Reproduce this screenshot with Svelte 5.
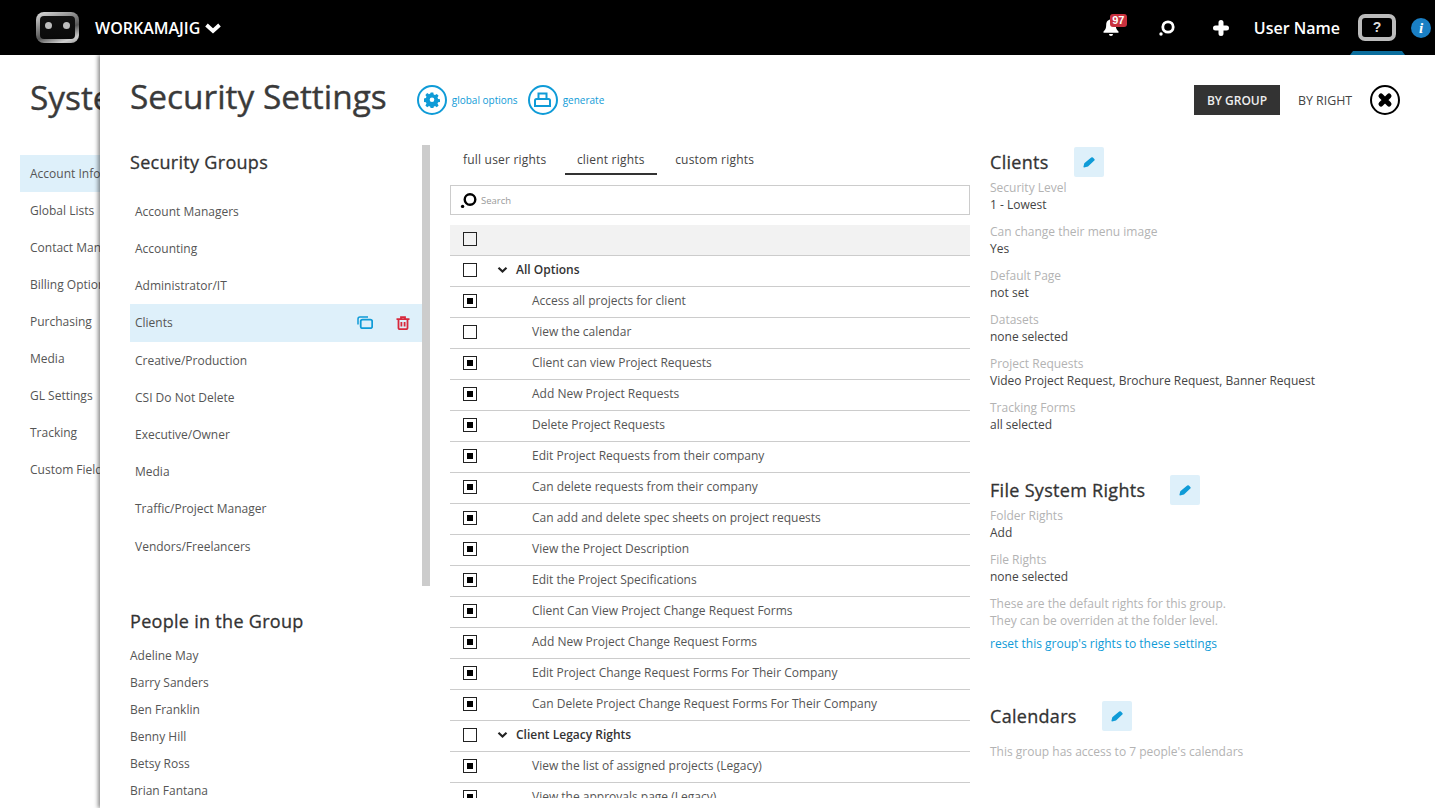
<script>
	const side_items = ['Account Information', 'Global Lists', 'Contact Management', 'Billing Options', 'Purchasing', 'Media', 'GL Settings', 'Tracking', 'Custom Fields'];
	const groups = ['Account Managers', 'Accounting', 'Administrator/IT', 'Clients', 'Creative/Production', 'CSI Do Not Delete', 'Executive/Owner', 'Media', 'Traffic/Project Manager', 'Vendors/Freelancers'];
	const people = ['Adeline May', 'Barry Sanders', 'Ben Franklin', 'Benny Hill', 'Betsy Ross', 'Brian Fantana'];
	const tabs = ['full user rights', 'client rights', 'custom rights'];
	const rows = [
		{ label: 'All Options', head: true, on: false },
		{ label: 'Access all projects for client', on: true },
		{ label: 'View the calendar', on: false },
		{ label: 'Client can view Project Requests', on: true },
		{ label: 'Add New Project Requests', on: true },
		{ label: 'Delete Project Requests', on: true },
		{ label: 'Edit Project Requests from their company', on: true },
		{ label: 'Can delete requests from their company', on: true },
		{ label: 'Can add and delete spec sheets on project requests', on: true },
		{ label: 'View the Project Description', on: true },
		{ label: 'Edit the Project Specifications', on: true },
		{ label: 'Client Can View Project Change Request Forms', on: true },
		{ label: 'Add New Project Change Request Forms', on: true },
		{ label: 'Edit Project Change Request Forms For Their Company', on: true },
		{ label: 'Can Delete Project Change Request Forms For Their Company', on: true },
		{ label: 'Client Legacy Rights', head: true, on: false },
		{ label: 'View the list of assigned projects (Legacy)', on: true },
		{ label: 'View the approvals page (Legacy)', on: true }
	];
	const client_fields = [
		['Security Level', '1 - Lowest'],
		['Can change their menu image', 'Yes'],
		['Default Page', 'not set'],
		['Datasets', 'none selected'],
		['Project Requests', 'Video Project Request, Brochure Request, Banner Request'],
		['Tracking Forms', 'all selected']
	];
	const file_fields = [
		['Folder Rights', 'Add'],
		['File Rights', 'none selected']
	];
</script>

{#snippet pencil()}
	<button class="edit" aria-label="edit">
		<svg width="12" height="11" viewBox="0 0 12 11"><path d="M8.200.6a1.200 1.200 0 0 1 1.700 0l1.400 1.300a1.200 1.200 0 0 1 0 1.700L5 9.500 1 10.600.4 10l.900-3.800z" fill="#0f9bd7" /></svg>
	</button>
{/snippet}

<div class="app">
	<header class="topbar">
		<div class="logo"><i></i><i></i></div>
		<div class="brand">WORKAMAJIG</div>
		<svg class="brand_caret" width="18" height="12" viewBox="0 0 18 12"><path d="M2.500 3l6.500 6 6.500-6" fill="none" stroke="#fff" stroke-width="3.800" /></svg>
		<div class="spacer"></div>
		<div class="bell">
			<svg width="18" height="18" viewBox="0 0 18 18"><path d="M9 1.500c3.200 0 4.800 2.400 4.800 5.400 0 3.200 1 5 2.700 6.600v1.300h-15v-1.300c1.700-1.600 2.700-3.400 2.700-6.600C4.200 3.900 5.800 1.500 9 1.500z" fill="#fff" /><path d="M7 16h4a2 2 0 0 1-4 0z" fill="#fff" /></svg>
			<span class="badge">97</span>
		</div>
		<svg class="top_search" width="18" height="18" viewBox="0 0 18 18"><circle cx="10" cy="8" r="5.200" fill="none" stroke="#fff" stroke-width="2.800" /><circle cx="3" cy="15" r="1.700" fill="#fff" /></svg>
		<svg class="top_plus" width="16" height="16" viewBox="0 0 16 16"><path d="M8 2.500v11M2.500 8h11" stroke="#fff" stroke-width="5" stroke-linecap="round" /></svg>
		<div class="user">User Name</div>
		<div class="help">?</div>
		<div class="info">i</div>
		<span class="help_tab"></span>
	</header>

	<main class="page">
		<h1>System Settings</h1>
		<nav class="side">
			{#each side_items as item, i}
				<div class="side_item" class:active={i === 0}>{item}</div>
			{/each}
		</nav>
	</main>

	<section class="panel">
		<div class="panel_head">
			<h1>Security Settings</h1>
			<button class="round_btn">
				<span class="ring">
					<svg width="16" height="16" viewBox="0 0 16 16"><path d="M6.700.8h2.600l.4 2 1.300.6 1.800-1.100 1.800 1.800-1.100 1.800.6 1.300 2 .4v2.600l-2 .4-.6 1.300 1.100 1.800-1.800 1.800-1.800-1.100-1.300.6-.4 2H6.700l-.4-2-1.300-.6-1.800 1.100-1.800-1.800 1.100-1.800-.6-1.300-2-.4V6.700l2-.4.6-1.300-1.100-1.800 1.800-1.800 1.800 1.100 1.300-.6z" fill="#0f9bd7" transform="translate(0 -.3)" /><circle cx="8" cy="7.800" r="2.300" fill="#fff" /></svg>
				</span>
				global options
			</button>
			<button class="round_btn">
				<span class="ring">
					<svg width="17" height="16" viewBox="0 0 17 16"><path d="M4.500 7V1.500h8V7M2.500 7h12a1.500 1.500 0 0 1 1.500 1.500v5.500H1V8.500A1.500 1.500 0 0 1 2.500 7z" fill="none" stroke="#0f9bd7" stroke-width="2" /></svg>
				</span>
				generate
			</button>
			<div class="spacer"></div>
			<button class="by by_on">BY GROUP</button>
			<button class="by">BY RIGHT</button>
			<button class="close" aria-label="close">
				<svg width="16" height="16" viewBox="0 0 16 16"><path d="M4 4l8 8M12 4l-8 8" stroke="#000" stroke-width="5" stroke-linecap="round" /></svg>
			</button>
		</div>

		<div class="columns">
			<div class="col_groups">
				<div class="groups_box">
					<h2>Security Groups</h2>
					<ul class="groups">
						{#each groups as group}
							<li class:active={group === 'Clients'}>
								<span>{group}</span>
								{#if group === 'Clients'}
									<svg class="copy" width="16" height="13" viewBox="0 0 16 13"><path d="M1 8.500V3a2 2 0 0 1 2-2h8" fill="none" stroke="#0f9bd7" stroke-width="1.500" /><rect x="3.700" y="3.700" width="11.500" height="8.500" rx="1.800" fill="none" stroke="#0f9bd7" stroke-width="1.800" /></svg>
									<svg class="trash" width="14" height="14" viewBox="0 0 14 14"><path d="M.5 3.200h13M5 3V1.200h4V3M2.500 3.500V12a1.200 1.200 0 0 0 1.200 1.200h6.600a1.200 1.200 0 0 0 1.200-1.200V3.500M5.400 6v4.500M8.600 6v4.500" fill="none" stroke="#d8283c" stroke-width="1.800" /></svg>
								{/if}
							</li>
						{/each}
					</ul>
				</div>
				<h2 class="people_title">People in the Group</h2>
				<ul class="people">
					{#each people as person}
						<li>{person}</li>
					{/each}
				</ul>
			</div>

			<div class="col_rights">
				<div class="tabs">
					{#each tabs as tab}
						<div class="tab" class:active={tab === 'client rights'}>{tab}</div>
					{/each}
				</div>
				<div class="search">
					<svg width="17" height="17" viewBox="0 0 17 17"><circle cx="10" cy="7.500" r="5.300" fill="none" stroke="#000" stroke-width="2.400" /><circle cx="2.600" cy="14.400" r="1.700" fill="#000" /></svg>
					<span>Search</span>
				</div>
				<div class="table">
					<div class="row top"><span class="check"></span></div>
					{#each rows as row}
						<div class="row" class:head={row.head}>
							<span class="check" class:on={row.on}></span>
							{#if row.head}
								<svg class="caret" width="11" height="8" viewBox="0 0 11 8"><path d="M1.500 1.800l4 3.700 4-3.700" fill="none" stroke="#222" stroke-width="2.200" /></svg>
							{/if}
							<span class="row_label">{row.label}</span>
						</div>
					{/each}
				</div>
			</div>

			<div class="col_info">
				<div class="info_title"><h2>Clients</h2>{@render pencil()}</div>
				{#each client_fields as [name, value]}
					<div class="field"><div class="muted">{name}</div><div>{value}</div></div>
				{/each}

				<div class="info_title files"><h2>File System Rights</h2>{@render pencil()}</div>
				{#each file_fields as [name, value]}
					<div class="field"><div class="muted">{name}</div><div>{value}</div></div>
				{/each}
				<div class="muted">These are the default rights for this group.</div>
				<div class="muted">They can be overriden at the folder level.</div>
				<div class="reset">reset this group's rights to these settings</div>

				<div class="info_title calendars"><h2>Calendars</h2>{@render pencil()}</div>
				<div class="muted cal_note">This group has access to 7 people's calendars</div>
			</div>
		</div>
	</section>
</div>

<style>
	:global(body) {
		margin: 0;
		background: #fff;
	}

	.app {
		position: relative;
		width: 1435px;
		height: 808px;
		overflow: hidden;
		font-family: 'Open Sans', sans-serif;
		font-size: 12px;
		color: #444;
	}

	button {
		font-family: inherit;
		border: 0;
		background: none;
		padding: 0;
	}

	h1, h2, ul {
		margin: 0;
		padding: 0;
		font-weight: 400;
	}

	li {
		list-style: none;
	}

	.spacer {
		flex: 1;
	}

	/* top bar */
	.topbar {
		position: relative;
		z-index: 3;
		display: flex;
		align-items: center;
		height: 55px;
		background: #000;
		color: #fff;
	}

	.logo {
		display: flex;
		justify-content: center;
		align-items: flex-start;
		gap: 11px;
		box-sizing: border-box;
		width: 43px;
		height: 31px;
		margin-left: 36px;
		padding-top: 6px;
		border: 4px solid transparent;
		border-radius: 8px;
		background:
			linear-gradient(#111, #0a0a0a) padding-box,
			linear-gradient(160deg, #e0e0e0 0%, #8c8c8c 35%, #555 60%, #cfcfcf 85%, #999 100%) border-box;
	}

	.logo i {
		width: 7px;
		height: 7px;
		border-radius: 50%;
		background: #bdbdbd;
	}

	.brand {
		margin-left: 16px;
		font-size: 16px;
		font-weight: 600;
	}

	.brand_caret {
		margin-left: 4px;
	}

	.bell {
		position: relative;
		width: 18px;
		height: 18px;
		margin-top: -2px;
		margin-right: 38px;
	}

	.badge {
		position: absolute;
		top: -4px;
		left: 8px;
		width: 17px;
		height: 13px;
		border-radius: 3px;
		background: #c8313e;
		font-family: 'Liberation Sans', sans-serif;
		font-size: 11px;
		font-weight: 700;
		line-height: 13px;
		text-align: center;
	}

	.top_search {
		margin-right: 37px;
	}

	.top_plus {
		margin-right: 25px;
	}

	.user {
		font-size: 16px;
		font-weight: 600;
		margin-right: 18px;
	}

	.help {
		box-sizing: border-box;
		width: 38px;
		height: 27px;
		margin-right: 15px;
		border: 4px solid #bbb;
		border-radius: 7px;
		font-family: 'Liberation Sans', sans-serif;
		font-size: 14px;
		font-weight: 700;
		line-height: 19px;
		text-align: center;
		color: #ddd;
	}

	.info {
		width: 20px;
		height: 20px;
		margin-right: 4px;
		border-radius: 50%;
		background: #1a7fc4;
		font-family: 'Liberation Serif', serif;
		font-size: 15px;
		font-style: italic;
		font-weight: 700;
		line-height: 20px;
		text-align: center;
	}

	.help_tab {
		position: absolute;
		left: 1350px;
		bottom: 0;
		width: 55px;
		height: 4px;
		background: #0a6d9c;
		clip-path: polygon(3px 0, 52px 0, 100% 100%, 0 100%);
	}

	/* page behind the panel */
	.page {
		padding: 21px 0 0 20px;
	}

	.page h1 {
		padding-left: 10px;
		font-size: 33.400px;
		line-height: 42px;
		color: #3a3a3a;
		white-space: nowrap;
		-webkit-text-stroke: 0.4px #3a3a3a;
	}

	.side {
		margin-top: 37px;
		width: 200px;
	}

	.side_item {
		padding-left: 10px;
		height: 37px;
		line-height: 37px;
		color: #555;
	}

	.side_item.active {
		background: #def0fa;
	}

	/* sliding panel */
	.panel {
		position: absolute;
		z-index: 2;
		top: 55px;
		left: 100px;
		right: 0;
		bottom: 0;
		background: #fff;
		box-shadow: -2px 0 4px rgba(0, 0, 0, 0.45);
		padding-left: 30px;
	}

	.panel_head {
		display: flex;
		align-items: center;
		height: 60px;
		margin-top: 15px;
		padding-right: 35px;
	}

	.panel_head h1 {
		margin-right: 30px;
		margin-bottom: 8px;
		font-size: 33.400px;
		color: #3a3a3a;
		-webkit-text-stroke: 0.4px #3a3a3a;
	}

	.round_btn {
		display: flex;
		align-items: center;
		gap: 5px;
		margin-right: 10px;
		font-size: 10px;
		color: #0f9bd7;
	}

	.ring {
		display: flex;
		align-items: center;
		justify-content: center;
		box-sizing: border-box;
		width: 30px;
		height: 30px;
		border: 2px solid #0f9bd7;
		border-radius: 50%;
	}

	.by {
		height: 30px;
		width: 90px;
		font-size: 12.400px;
		color: #444;
	}

	.by_on {
		width: 86px;
		font-size: 12px;
		background: #333;
		color: #eee;
		font-weight: 600;
	}

	.close {
		display: flex;
		align-items: center;
		justify-content: center;
		box-sizing: border-box;
		width: 30px;
		height: 30px;
		border: 2px solid #000;
		border-radius: 50%;
	}

	.columns {
		display: flex;
		margin-top: 15px;
	}

	h2 {
		font-size: 18px;
		font-weight: 400;
		letter-spacing: 0.3px;
		color: #333;
		line-height: 24px;
		-webkit-text-stroke: 0.3px #333;
	}

	/* security groups */
	.col_groups {
		width: 300px;
		flex: none;
	}

	.groups_box {
		box-sizing: border-box;
		height: 441px;
		border-right: 8px solid #ccc;
		padding-top: 5px;
	}

	.groups {
		margin-top: 18.800px;
	}

	.groups li {
		display: flex;
		align-items: center;
		height: 37.200px;
		padding-left: 5px;
		color: #555;
	}

	.groups li span {
		flex: 1;
	}

	.groups li.active {
		background: #def0fa;
	}

	.copy {
		margin-right: 23px;
	}

	.trash {
		margin-right: 12px;
	}

	.people_title {
		margin-top: 23px;
	}

	.people {
		margin-top: 9px;
	}

	.people li {
		height: 27px;
		line-height: 27px;
		color: #555;
	}

	/* rights table */
	.col_rights {
		width: 520px;
		margin-left: 20px;
		flex: none;
	}

	.tabs {
		display: flex;
		height: 30px;
		padding-left: 1px;
	}

	.tab {
		box-sizing: border-box;
		padding: 0 12px;
		margin-right: 6.500px;
		line-height: 30px;
		font-size: 12px;
		letter-spacing: 0.2px;
		color: #444;
	}

	.tab.active {
		border-bottom: 2px solid #333;
	}

	.search {
		display: flex;
		align-items: center;
		gap: 4px;
		box-sizing: border-box;
		height: 30px;
		margin-top: 10px;
		padding-left: 9px;
		border: 1px solid #ccc;
		font-size: 9.500px;
		color: #999;
	}

	.table {
		height: 573px;
		margin-top: 10px;
		overflow: hidden;
	}

	.row {
		display: flex;
		align-items: center;
		box-sizing: border-box;
		height: 31px;
		padding-left: 13px;
		padding-bottom: 2px;
		border-bottom: 1px solid #ccc;
		color: #555;
	}

	.row.top {
		background: #f2f2f2;
	}

	.check {
		display: flex;
		align-items: center;
		justify-content: center;
		box-sizing: border-box;
		width: 14px;
		height: 14px;
		border: 1px solid #222;
		background: #fff;
		flex: none;
	}

	.row.top .check {
		background: #f2f2f2;
	}

	.check.on::after {
		content: '';
		width: 6px;
		height: 6px;
		background: #000;
	}

	.row_label {
		margin-left: 55px;
		margin-bottom: 1px;
	}

	.row.head .row_label {
		margin-left: 8px;
		font-weight: 600;
		color: #333;
	}

	.caret {
		margin-left: 20px;
	}

	/* right column */
	.col_info {
		margin-left: 20px;
		flex: 1;
		color: #444;
		line-height: 17px;
	}

	.info_title {
		display: flex;
		align-items: center;
		gap: 25px;
		height: 30px;
		margin-top: 2px;
		margin-bottom: 2px;
	}

	.edit {
		display: flex;
		align-items: center;
		justify-content: center;
		width: 30px;
		height: 30px;
		border-radius: 2px;
		background: #def0fa;
	}

	.field {
		margin-bottom: 10px;
	}

	.muted {
		color: #b3b3b3;
	}

	.reset {
		margin-top: 6px;
		color: #0f9bd7;
	}

	.files {
		margin-top: 42px;
		margin-bottom: 2px;
	}

	.calendars {
		margin-top: 49px;
	}

	.cal_note {
		margin-top: 12px;
	}
</style>
